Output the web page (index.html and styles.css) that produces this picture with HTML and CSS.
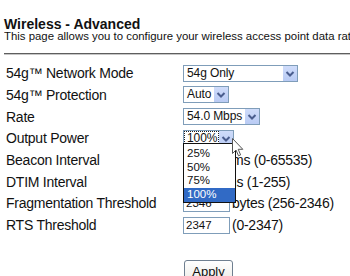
FILE: index.html
```html
<!DOCTYPE html>
<html>
<head>
<meta charset="utf-8">
<title>Wireless - Advanced</title>
<link rel="stylesheet" href="styles.css">
</head>
<body>
<div class="page">
  <h1 class="title">Wireless - Advanced</h1>
  <p class="intro">This page allows you to configure your wireless access point data rate and other advanced settings.</p>
  <div class="rule"></div>
  <div class="form">
    <div class="row">
      <span class="label">54g™ Network Mode</span>
      <span class="field">
        <span class="select w-mode"><span class="val">54g Only</span><span class="arrow"><svg width="14" height="15" viewBox="0 0 14 15"><path d="M3.5 6 L7 9.5 L10.5 6" fill="none" stroke="#4a5d8e" stroke-width="2"/></svg></span></span>
      </span>
    </div>
    <div class="row">
      <span class="label">54g™ Protection</span>
      <span class="field">
        <span class="select w-prot"><span class="val">Auto</span><span class="arrow"><svg width="14" height="15" viewBox="0 0 14 15"><path d="M3.5 6 L7 9.5 L10.5 6" fill="none" stroke="#4a5d8e" stroke-width="2"/></svg></span></span>
      </span>
    </div>
    <div class="row">
      <span class="label">Rate</span>
      <span class="field">
        <span class="select w-rate"><span class="val">54.0 Mbps</span><span class="arrow"><svg width="14" height="15" viewBox="0 0 14 15"><path d="M3.5 6 L7 9.5 L10.5 6" fill="none" stroke="#4a5d8e" stroke-width="2"/></svg></span></span>
      </span>
    </div>
    <div class="row">
      <span class="label">Output Power</span>
      <span class="field">
        <span class="select w-power"><span class="val focus">100%</span><span class="arrow"><svg width="14" height="15" viewBox="0 0 14 15"><path d="M3.5 6 L7 9.5 L10.5 6" fill="none" stroke="#4a5d8e" stroke-width="2"/></svg></span>
          <span class="list">
            <span class="opt">25%</span>
            <span class="opt">50%</span>
            <span class="opt">75%</span>
            <span class="opt sel">100%</span>
          </span>
        </span>
      </span>
    </div>
    <div class="row">
      <span class="label">Beacon Interval</span>
      <span class="field"><input class="input" type="text" value="100"><span class="unit">ms (0-65535)</span></span>
    </div>
    <div class="row">
      <span class="label">DTIM Interval</span>
      <span class="field"><input class="input narrow" type="text" value="1"><span class="unit">ms (1-255)</span></span>
    </div>
    <div class="row">
      <span class="label">Fragmentation Threshold</span>
      <span class="field"><input class="input" type="text" value="2346"><span class="unit">bytes (256-2346)</span></span>
    </div>
    <div class="row">
      <span class="label">RTS Threshold</span>
      <span class="field"><input class="input" type="text" value="2347"><span class="unit">(0-2347)</span></span>
    </div>
  </div>
  <div class="actions"><button class="btn" type="button">Apply</button></div>
</div>
<svg class="cursor" width="12" height="19" viewBox="0 0 12 19"><path d="M0.5 0.5 L0.5 15.5 L4 12 L6.5 17.8 L8.6 16.9 L6.2 11.3 L10.8 11.3 Z" fill="#fff" stroke="#555" stroke-width="1"/></svg>
</body>
</html>
```
FILE: styles.css
```css
html, body {
  margin: 0;
  padding: 0;
  overflow: hidden;
  background: #fff;
}
body {
  width: 350px;
  height: 276px;
  position: relative;
  font-family: "Liberation Sans", Arial, sans-serif;
  color: #111;
}
.page {
  padding: 17px 0 0 4px;
}
.title {
  margin: 0;
  font-size: 14px;
  font-weight: bold;
  line-height: 14px;
}
.intro {
  margin: 0;
  font-size: 11.4px;
  line-height: 11px;
  white-space: nowrap;
  overflow: hidden;
}
.rule {
  margin-top: 11px;
  height: 0;
  border-top: 1px solid #5e5e5e;
  border-bottom: 1px solid #c6c6c6;
}
.form {
  margin-top: 7.45px;
  padding-left: 2px;
}
.row {
  display: flex;
  align-items: center;
  height: 21.7px;
}
.label {
  width: 177px;
  flex: none;
  font-size: 14px;
  letter-spacing: -0.25px;
  white-space: nowrap;
}
.field {
  display: flex;
  align-items: center;
  font-size: 14px;
  letter-spacing: -0.25px;
  white-space: nowrap;
}
.select {
  position: relative;
  display: flex;
  box-sizing: border-box;
  height: 17px;
  border: 1px solid #7f9db9;
  background: #fff;
}
.w-mode { width: 115px; }
.w-prot { width: 46px; }
.w-rate { width: 77px; }
.w-power { width: 51px; }
.val {
  flex: 1;
  font-size: 12px;
  line-height: 15px;
  padding-left: 3px;
  letter-spacing: -0.1px;
}
.val.focus {
  outline: 1px dotted #222;
  outline-offset: -1px;
}
.arrow {
  flex: none;
  width: 14px;
  height: 15px;
  background: linear-gradient(#cfdcfa, #b9cbf4);
}
.arrow svg {
  display: block;
}
.list {
  position: absolute;
  top: 12px;
  left: -1px;
  width: 53px;
  box-sizing: border-box;
  height: 60px;
  padding-top: 3px;
  border: 1px solid #111;
  background: #fff;
  display: flex;
  flex-direction: column;
  z-index: 2;
}
.opt {
  height: 13.7px;
  line-height: 13.7px;
  font-size: 11.5px;
  padding-left: 3px;
  letter-spacing: 0;
}
.opt.sel {
  background: #316ac5;
  color: #fff;
}
.input {
  box-sizing: border-box;
  width: 47px;
  height: 17px;
  margin: 0 2px 0 0;
  padding: 0 2px;
  border: 1px solid #7f9db9;
  font-family: "Liberation Sans", Arial, sans-serif;
  font-size: 11.5px;
  color: #111;
  background: #fff;
}
.input.narrow {
  width: 40px;
}
.actions {
  margin-top: 24px;
  padding-left: 180px;
}
.btn {
  width: 49px;
  height: 23px;
  padding: 0;
  border: 1px solid #6f7f90;
  border-radius: 3px;
  background: linear-gradient(#ffffff, #ecebe6);
  font-family: "Liberation Sans", Arial, sans-serif;
  font-size: 13px;
  color: #111;
}
.cursor {
  position: absolute;
  left: 232px;
  top: 138px;
  z-index: 3;
}
```
